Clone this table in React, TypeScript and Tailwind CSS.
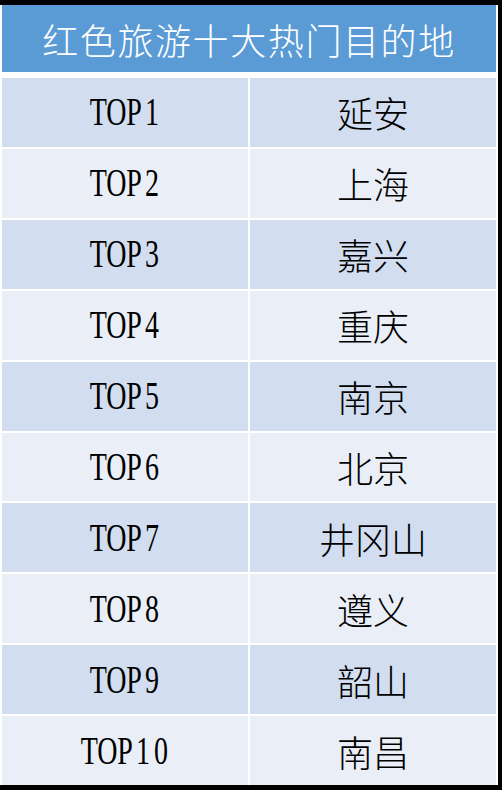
const ROWS: Array<{ rank: string; city: string }> = [
  { rank: "TOP1", city: "延安" },
  { rank: "TOP2", city: "上海" },
  { rank: "TOP3", city: "嘉兴" },
  { rank: "TOP4", city: "重庆" },
  { rank: "TOP5", city: "南京" },
  { rank: "TOP6", city: "北京" },
  { rank: "TOP7", city: "井冈山" },
  { rank: "TOP8", city: "遵义" },
  { rank: "TOP9", city: "韶山" },
  { rank: "TOP10", city: "南昌" },
];

const CJK = "font-['Noto_Sans_CJK_SC',sans-serif]";

// Half-width Latin like the Song face: each letter gets an 18px cell.
function Rank({ text }: { text: string }) {
  return (
    <span className="flex">
      {text.split("").map((ch, i) => (
        <span key={i} className="flex w-[18px] justify-center overflow-visible">
          <span className="inline-block scale-x-[0.7] font-['Liberation_Serif',serif] text-[40px] leading-none text-black">
            {ch}
          </span>
        </span>
      ))}
    </span>
  );
}

export default function App() {
  return (
    <div className="h-[790px] w-[502px] bg-black pt-[5px] pr-[4px] pb-[5px]">
      <div className="flex h-full flex-col bg-white px-[2px]">
        <div
          className={`flex h-[67px] items-center justify-center bg-[#5b9bd5] text-[36px] font-light leading-none tracking-[1.6px] text-white ${CJK}`}
        >
          红色旅游十大热门目的地
        </div>
        <div className="mt-[6px] grid flex-1 grid-cols-2 grid-rows-[repeat(10,1fr)] gap-[2px]">
          {ROWS.map((row, i) => {
            const bg = i % 2 === 0 ? "bg-[#d2deef]" : "bg-[#eaeff7]";
            return [
              <div key={row.rank} className={`flex items-center justify-center ${bg}`}>
                <Rank text={row.rank} />
              </div>,
              <div key={row.city} className={`flex items-center justify-center ${bg}`}>
                <span className={`text-[36px] font-light leading-none text-black ${CJK}`}>{row.city}</span>
              </div>,
            ];
          })}
        </div>
      </div>
    </div>
  );
}
